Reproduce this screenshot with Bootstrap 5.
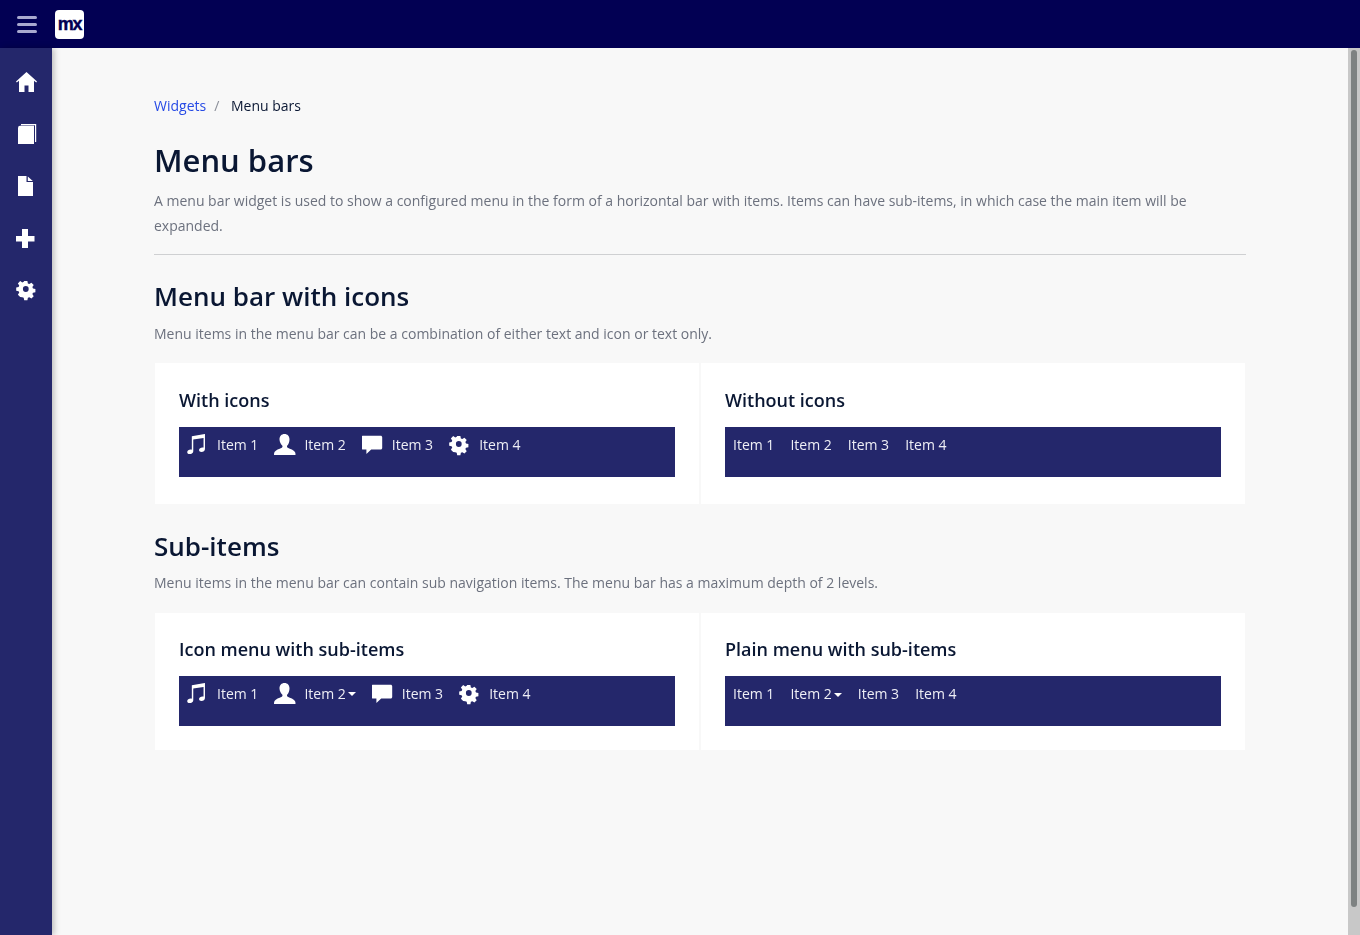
<!DOCTYPE html>
<html lang="en">
<head>
    <meta charset="UTF-8">
    <meta name="viewport" content="width=device-width, initial-scale=1.0">
    <title>Menu bars</title>
    <link href="https://cdn.jsdelivr.net/npm/bootstrap@5.3.0/dist/css/bootstrap.min.css" rel="stylesheet">
    <style>
        html, body { height: 100%; overflow: hidden; }
        body { font-family: "Open Sans", sans-serif; font-size: 14px; background: #f8f8f8; color: #0a1733; }
        .app-top { height: 48px; background: #020053; }
        .burger { width: 55px; padding-left: 17px; }
        .burger span { display: block; width: 20px; height: 3px; border-radius: 2px; background: #a9a9cf; margin-bottom: 4px; }
        .burger span:last-child { margin-bottom: 0; }
        .mx-logo { width: 29px; height: 29px; border-radius: 4px; background: #fff; color: #020053; font-family: "Liberation Sans", sans-serif; font-weight: 700; font-size: 18px; letter-spacing: -1.2px; line-height: 1; -webkit-text-stroke: .4px #020053; }
        .app-body { height: 887px; }
        .side-nav { width: 52px; background: #24276b; box-shadow: 2px 0 6px rgba(0,0,0,.25); z-index: 1; padding-top: 8px; }
        .side-link { height: 52px; color: #fff; padding-left: 16px; }
        .side-link svg { width: 22px; height: 22px; fill: #fff; display: block; }
        .page-wrap { padding: 46px 102px 0; min-width: 0; will-change: transform; }
        .crumbs { font-size: 14px; line-height: 24px; margin-bottom: 24px; }
        .crumbs a { color: #264ae5; text-decoration: none; }
        .crumbs .sep { color: #8b8f99; margin: 0 8px; }
        .page-title { font-size: 31px; font-weight: 600; line-height: 36px; margin: 0 0 10px; }
        .intro { color: #6c717e; font-size: 14px; line-height: 25px; margin: 0; }
        .rule { border: 0; border-top: 1px solid #cfd0d2; opacity: 1; margin: 16px 0 24px; }
        .sec-title { font-size: 26px; font-weight: 600; line-height: 34px; margin: 0 0 8px; }
        .sec-title.tight { margin-bottom: 7px; }
        .panels { gap: 2px; padding: 0 1px; margin: 17px 0 25px; }
        .panels.tight { margin-top: 18px; }
        .panel-box { flex: 1 1 0; background: #fff; padding: 25px 24px 27px; }
        .panels.tight .panel-box { padding-top: 24px; padding-bottom: 24px; }
        .panel-title { font-size: 18px; font-weight: 600; line-height: 25px; margin: 0 0 14px; }
        .menu-strip { height: 50px; background: #24276b; color: #eeeef5; padding: 5px 8px 0; }
        .menu-entry { line-height: 26px; margin-right: 16px; white-space: nowrap; font-size: 14px; }
        .menu-entry svg { width: 22px; height: 22px; fill: #fff; margin-right: 8px; flex: none; }
        .caret-down { display: inline-block; width: 0; height: 0; margin-left: 2px; border-left: 4px solid transparent; border-right: 4px solid transparent; border-top: 4px solid #fff; vertical-align: 2px; }
        .fake-scroll { width: 12px; background: #c8c8c8; padding: 2px 3px 28px; }
        .fake-thumb { height: 100%; background: #7e8282; border-radius: 3px; }
    </style>
</head>
<body>
    <svg width="0" height="0" class="position-absolute">
        <symbol id="i-home" viewBox="0 0 22 22"><path d="M10.500 1 0 10.500l.8 1L3 9.700V21h5.500v-6.500h4V21H18V9.700l2.200 1.800.8-1z"/></symbol>
        <symbol id="i-book" viewBox="0 0 22 22"><path d="M4 2.800h14V21H2V5q0-2.200 2-2.200zM5 1h15.200v18H19V2.200H5z"/></symbol>
        <symbol id="i-file" viewBox="0 0 22 22"><path d="M2 1h8.500v6H17v14H2zM11.800 1.500l5 4.500h-5z"/></symbol>
        <symbol id="i-plus" viewBox="0 0 22 22"><path d="M6 2h6v7h6.500v5.500H12V21H6v-6.500H0V9h6z"/></symbol>
        <symbol id="i-cog" viewBox="0 0 22 22"><path fill-rule="evenodd" d="M9 1h4l.6 3 1.800.8 2.600-1.700 2.900 2.900-1.700 2.600.8 1.800 3 .6v4l-3 .6-.8 1.800 1.700 2.600-2.900 2.900-2.600-1.700-1.800.8-.6 3H9l-.6-3-1.800-.8L4 21l-2.900-2.900L2.800 15.500 2 13.700l-3-.6v-4l3-.6.8-1.800L1.100 4 4 1.100l2.600 1.700L8.400 2zM11 7.400a3.600 3.600 0 1 0 0 7.200 3.600 3.600 0 0 0 0-7.200z" transform="translate(1 1.200) scale(.8)"/></symbol>
        <symbol id="i-music" viewBox="0 0 22 22"><path d="M20.500 1v15.600c0 1.900-1.800 3.200-3.700 3.200-1.400 0-2.500-.8-2.500-2 0-1.600 1.800-2.800 3.600-2.800.4 0 .8 0 1.100.1V5.300L8.300 6.900V19c0 1.800-1.800 3-3.700 3-1.400 0-2.600-.8-2.600-2 0-1.600 1.800-2.800 3.600-2.800.4 0 .8.100 1.200.2V3.400z" transform="translate(-1.700 -1) scale(.96 .96)"/></symbol>
        <symbol id="i-user" viewBox="0 0 22 22"><path d="M11 1c3 0 5 2.200 5 5.400 0 2.400-1 4.800-2.200 6.200-.5.700-.4 1.700.4 2.100 2.700 1.300 6 2.200 7.300 4.300.5.900.5 2 .5 3H.5c0-1 0-2.100.5-3 1.300-2.100 4.600-3 7.300-4.300.8-.4.900-1.400.4-2.100C7.500 11.200 6 8.800 6 6.400 6 3.200 8 1 11 1z" transform="translate(-.5 -1)"/></symbol>
        <symbol id="i-chat" viewBox="0 0 22 22"><path d="M1.500 1.700h17.800c.8 0 1.500.7 1.500 1.500v10.900c0 .8-.7 1.500-1.500 1.500h-9.500L5 20v-4.400H1.500c-.8 0-1.500-.7-1.500-1.500V3.200c0-.8.700-1.500 1.500-1.500z" transform="translate(-.6 0)"/></symbol>
    </svg>

    <header class="app-top d-flex align-items-center">
        <div class="burger"><span></span><span></span><span></span></div>
        <div class="mx-logo d-flex align-items-center justify-content-center">mx</div>
    </header>

    <div class="app-body d-flex">
        <nav class="side-nav flex-shrink-0">
            <div class="side-link d-flex align-items-center"><svg><use href="#i-home"/></svg></div>
            <div class="side-link d-flex align-items-center"><svg><use href="#i-book"/></svg></div>
            <div class="side-link d-flex align-items-center"><svg><use href="#i-file"/></svg></div>
            <div class="side-link d-flex align-items-center"><svg><use href="#i-plus"/></svg></div>
            <div class="side-link d-flex align-items-center"><svg><use href="#i-cog"/></svg></div>
        </nav>

        <main class="page-wrap flex-grow-1">
            <div class="crumbs"><a href="#">Widgets</a><span class="sep">/</span> <span>Menu bars</span></div>
            <h1 class="page-title">Menu bars</h1>
            <p class="intro">A menu bar widget is used to show a configured menu in the form of a horizontal bar with items. Items can have sub-items, in which case the main item will be expanded.</p>
            <hr class="rule">

            <h2 class="sec-title">Menu bar with icons</h2>
            <p class="intro">Menu items in the menu bar can be a combination of either text and icon or text only.</p>
            <div class="panels d-flex">
                <section class="panel-box">
                    <h3 class="panel-title">With icons</h3>
                    <div class="menu-strip d-flex align-items-start">
                        <div class="menu-entry d-flex align-items-center"><svg><use href="#i-music"/></svg>Item 1</div>
                        <div class="menu-entry d-flex align-items-center"><svg><use href="#i-user"/></svg>Item 2</div>
                        <div class="menu-entry d-flex align-items-center"><svg><use href="#i-chat"/></svg>Item 3</div>
                        <div class="menu-entry d-flex align-items-center"><svg><use href="#i-cog"/></svg>Item 4</div>
                    </div>
                </section>
                <section class="panel-box">
                    <h3 class="panel-title">Without icons</h3>
                    <div class="menu-strip d-flex align-items-start">
                        <div class="menu-entry">Item 1</div>
                        <div class="menu-entry">Item 2</div>
                        <div class="menu-entry">Item 3</div>
                        <div class="menu-entry">Item 4</div>
                    </div>
                </section>
            </div>

            <h2 class="sec-title tight">Sub-items</h2>
            <p class="intro">Menu items in the menu bar can contain sub navigation items. The menu bar has a maximum depth of 2 levels.</p>
            <div class="panels tight d-flex">
                <section class="panel-box">
                    <h3 class="panel-title">Icon menu with sub-items</h3>
                    <div class="menu-strip d-flex align-items-start">
                        <div class="menu-entry d-flex align-items-center"><svg><use href="#i-music"/></svg>Item 1</div>
                        <div class="menu-entry d-flex align-items-center"><svg><use href="#i-user"/></svg>Item 2<span class="caret-down"></span></div>
                        <div class="menu-entry d-flex align-items-center"><svg><use href="#i-chat"/></svg>Item 3</div>
                        <div class="menu-entry d-flex align-items-center"><svg><use href="#i-cog"/></svg>Item 4</div>
                    </div>
                </section>
                <section class="panel-box">
                    <h3 class="panel-title">Plain menu with sub-items</h3>
                    <div class="menu-strip d-flex align-items-start">
                        <div class="menu-entry">Item 1</div>
                        <div class="menu-entry">Item 2<span class="caret-down"></span></div>
                        <div class="menu-entry">Item 3</div>
                        <div class="menu-entry">Item 4</div>
                    </div>
                </section>
            </div>
        </main>

        <div class="fake-scroll flex-shrink-0"><div class="fake-thumb"></div></div>
    </div>

    <script src="https://cdn.jsdelivr.net/npm/bootstrap@5.3.0/dist/js/bootstrap.bundle.min.js"></script>
</body>
</html>
